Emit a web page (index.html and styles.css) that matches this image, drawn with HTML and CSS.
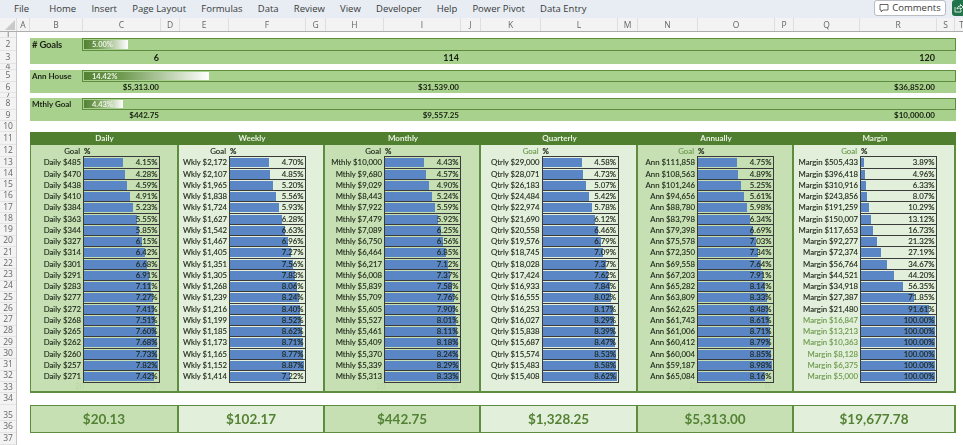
FILE: index.html
```html
<!DOCTYPE html>
<html lang="en">
<head>
<meta charset="utf-8">
<title>Goals dashboard</title>
<link rel="stylesheet" href="styles.css">
</head>
<body>
<div class="app">
  <nav class="menu">
    <span class="tab file">File</span><span class="tab">Home</span><span class="tab">Insert</span><span class="tab">Page Layout</span><span class="tab">Formulas</span><span class="tab">Data</span><span class="tab">Review</span><span class="tab">View</span><span class="tab">Developer</span><span class="tab">Help</span><span class="tab">Power Pivot</span><span class="tab">Data Entry</span>
    <button class="comments"><svg width="10" height="10" viewBox="0 0 10 10"><path d="M1 1.5h8v5.5H4L2.2 8.8V7H1z" fill="none" stroke="#555" stroke-width=".9"/></svg>Comments</button>
    <div class="share"><svg width="9" height="10" viewBox="0 0 9 10"><path d="M1 4v5h6V7M3 6c0-2 1.500-3 3.500-3V1.500L9 4 6.500 6.500V5C5 5 4 5.300 3 6z" fill="none" stroke="#fff" stroke-width=".8"/></svg></div>
  </nav>
  <div class="colhead">
    <span class="corner"><svg width="10" height="10" viewBox="0 0 10 10"><path d="M10 0v10H0z" fill="#c9c9c9"/></svg></span><span>A</span><span>B</span><span>C</span><span>D</span><span>E</span><span>F</span><span>G</span><span>H</span><span>I</span><span>J</span><span>K</span><span>L</span><span>M</span><span>N</span><span>O</span><span>P</span><span>Q</span><span>R</span><span>S</span><span>T</span>
  </div>
  <div class="workspace">
    <div class="rowhead">
      <span>1</span><span>2</span><span>3</span><span>4</span><span>5</span><span>6</span><span>7</span><span>8</span><span>9</span><span>10</span><span>11</span><span>12</span><span>13</span><span>14</span><span>15</span><span>16</span><span>17</span><span>18</span><span>19</span><span>20</span><span>21</span><span>22</span><span>23</span><span>24</span><span>25</span><span>26</span><span>27</span><span>28</span><span>29</span><span>30</span><span>31</span><span>32</span><span>33</span><span>34</span><span class="low">35</span><span>36</span><span>37</span>
    </div>
    <main class="sheet">
      <section class="kpi kpi-goals">
        <div class="kpi-top"><span class="kpi-name big">#&nbsp;Goals</span><div class="meter"><div class="meter-fill" style="--pct:5"><span>5.00%</span></div></div></div>
        <div class="kpi-vals big"><span>6</span><span>114</span><span>120</span></div>
      </section>
      <section class="kpi kpi-ann">
        <div class="kpi-top"><span class="kpi-name">Ann House</span><div class="meter"><div class="meter-fill" style="--pct:14.42"><span>14.42%</span></div></div></div>
        <div class="kpi-vals"><span>$5,313.00</span><span>$31,539.00</span><span>$36,852.00</span></div>
      </section>
      <section class="kpi kpi-mth">
        <div class="kpi-top"><span class="kpi-name">Mthly Goal</span><div class="meter"><div class="meter-fill" style="--pct:4.43"><span>4.43%</span></div></div></div>
        <div class="kpi-vals"><span>$442.75</span><span>$9,557.25</span><span>$10,000.00</span></div>
      </section>

      <section class="board">
        <div class="col c1 dark">
          <h2>Daily</h2>
          <div class="goal"><span>Goal</span><span class="pct">%</span></div>
          <div class="row"><span class="l">Daily $485</span><div class="b"><i style="--v:4.15"></i><span>4.15%</span></div></div>
          <div class="row"><span class="l">Daily $470</span><div class="b"><i style="--v:4.28"></i><span>4.28%</span></div></div>
          <div class="row"><span class="l">Daily $438</span><div class="b"><i style="--v:4.59"></i><span>4.59%</span></div></div>
          <div class="row"><span class="l">Daily $410</span><div class="b"><i style="--v:4.91"></i><span>4.91%</span></div></div>
          <div class="row"><span class="l">Daily $384</span><div class="b"><i style="--v:5.23"></i><span>5.23%</span></div></div>
          <div class="row"><span class="l">Daily $363</span><div class="b"><i style="--v:5.55"></i><span>5.55%</span></div></div>
          <div class="row"><span class="l">Daily $344</span><div class="b"><i style="--v:5.85"></i><span>5.85%</span></div></div>
          <div class="row"><span class="l">Daily $327</span><div class="b"><i style="--v:6.15"></i><span>6.15%</span></div></div>
          <div class="row"><span class="l">Daily $314</span><div class="b"><i style="--v:6.42"></i><span>6.42%</span></div></div>
          <div class="row"><span class="l">Daily $301</span><div class="b"><i style="--v:6.68"></i><span>6.68%</span></div></div>
          <div class="row"><span class="l">Daily $291</span><div class="b"><i style="--v:6.91"></i><span>6.91%</span></div></div>
          <div class="row"><span class="l">Daily $283</span><div class="b"><i style="--v:7.11"></i><span>7.11%</span></div></div>
          <div class="row"><span class="l">Daily $277</span><div class="b"><i style="--v:7.27"></i><span>7.27%</span></div></div>
          <div class="row"><span class="l">Daily $272</span><div class="b"><i style="--v:7.41"></i><span>7.41%</span></div></div>
          <div class="row"><span class="l">Daily $268</span><div class="b"><i style="--v:7.51"></i><span>7.51%</span></div></div>
          <div class="row"><span class="l">Daily $265</span><div class="b"><i style="--v:7.60"></i><span>7.60%</span></div></div>
          <div class="row"><span class="l">Daily $262</span><div class="b"><i style="--v:7.68"></i><span>7.68%</span></div></div>
          <div class="row"><span class="l">Daily $260</span><div class="b"><i style="--v:7.73"></i><span>7.73%</span></div></div>
          <div class="row"><span class="l">Daily $257</span><div class="b"><i style="--v:7.82"></i><span>7.82%</span></div></div>
          <div class="row last"><span class="l">Daily $271</span><div class="b"><i style="--v:7.42"></i><span>7.42%</span></div></div>
          <div class="ghost"><span>20</span><span>0</span></div>
        </div>
        <div class="col c2 light">
          <h2>Weekly</h2>
          <div class="goal"><span>Goal</span><span class="pct">%</span></div>
          <div class="row"><span class="l">Wkly $2,172</span><div class="b"><i style="--v:4.70"></i><span>4.70%</span></div></div>
          <div class="row"><span class="l">Wkly $2,107</span><div class="b"><i style="--v:4.85"></i><span>4.85%</span></div></div>
          <div class="row"><span class="l">Wkly $1,965</span><div class="b"><i style="--v:5.20"></i><span>5.20%</span></div></div>
          <div class="row"><span class="l">Wkly $1,838</span><div class="b"><i style="--v:5.56"></i><span>5.56%</span></div></div>
          <div class="row"><span class="l">Wkly $1,724</span><div class="b"><i style="--v:5.93"></i><span>5.93%</span></div></div>
          <div class="row"><span class="l">Wkly $1,627</span><div class="b"><i style="--v:6.28"></i><span>6.28%</span></div></div>
          <div class="row"><span class="l">Wkly $1,542</span><div class="b"><i style="--v:6.63"></i><span>6.63%</span></div></div>
          <div class="row"><span class="l">Wkly $1,467</span><div class="b"><i style="--v:6.96"></i><span>6.96%</span></div></div>
          <div class="row"><span class="l">Wkly $1,405</span><div class="b"><i style="--v:7.27"></i><span>7.27%</span></div></div>
          <div class="row"><span class="l">Wkly $1,351</span><div class="b"><i style="--v:7.56"></i><span>7.56%</span></div></div>
          <div class="row"><span class="l">Wkly $1,305</span><div class="b"><i style="--v:7.83"></i><span>7.83%</span></div></div>
          <div class="row"><span class="l">Wkly $1,268</span><div class="b"><i style="--v:8.06"></i><span>8.06%</span></div></div>
          <div class="row"><span class="l">Wkly $1,239</span><div class="b"><i style="--v:8.24"></i><span>8.24%</span></div></div>
          <div class="row"><span class="l">Wkly $1,216</span><div class="b"><i style="--v:8.40"></i><span>8.40%</span></div></div>
          <div class="row"><span class="l">Wkly $1,199</span><div class="b"><i style="--v:8.52"></i><span>8.52%</span></div></div>
          <div class="row"><span class="l">Wkly $1,185</span><div class="b"><i style="--v:8.62"></i><span>8.62%</span></div></div>
          <div class="row"><span class="l">Wkly $1,173</span><div class="b"><i style="--v:8.71"></i><span>8.71%</span></div></div>
          <div class="row"><span class="l">Wkly $1,165</span><div class="b"><i style="--v:8.77"></i><span>8.77%</span></div></div>
          <div class="row"><span class="l">Wkly $1,152</span><div class="b"><i style="--v:8.87"></i><span>8.87%</span></div></div>
          <div class="row last"><span class="l">Wkly $1,414</span><div class="b"><i style="--v:7.22"></i><span>7.22%</span></div></div>
        </div>
        <div class="col c3 dark">
          <h2>Monthly</h2>
          <div class="goal"><span>Goal</span><span class="pct">%</span></div>
          <div class="row"><span class="l">Mthly $10,000</span><div class="b"><i style="--v:4.43"></i><span>4.43%</span></div></div>
          <div class="row"><span class="l">Mthly $9,680</span><div class="b"><i style="--v:4.57"></i><span>4.57%</span></div></div>
          <div class="row"><span class="l">Mthly $9,029</span><div class="b"><i style="--v:4.90"></i><span>4.90%</span></div></div>
          <div class="row"><span class="l">Mthly $8,443</span><div class="b"><i style="--v:5.24"></i><span>5.24%</span></div></div>
          <div class="row"><span class="l">Mthly $7,922</span><div class="b"><i style="--v:5.59"></i><span>5.59%</span></div></div>
          <div class="row"><span class="l">Mthly $7,479</span><div class="b"><i style="--v:5.92"></i><span>5.92%</span></div></div>
          <div class="row"><span class="l">Mthly $7,089</span><div class="b"><i style="--v:6.25"></i><span>6.25%</span></div></div>
          <div class="row"><span class="l">Mthly $6,750</span><div class="b"><i style="--v:6.56"></i><span>6.56%</span></div></div>
          <div class="row"><span class="l">Mthly $6,464</span><div class="b"><i style="--v:6.85"></i><span>6.85%</span></div></div>
          <div class="row"><span class="l">Mthly $6,217</span><div class="b"><i style="--v:7.12"></i><span>7.12%</span></div></div>
          <div class="row"><span class="l">Mthly $6,008</span><div class="b"><i style="--v:7.37"></i><span>7.37%</span></div></div>
          <div class="row"><span class="l">Mthly $5,839</span><div class="b"><i style="--v:7.58"></i><span>7.58%</span></div></div>
          <div class="row"><span class="l">Mthly $5,709</span><div class="b"><i style="--v:7.76"></i><span>7.76%</span></div></div>
          <div class="row"><span class="l">Mthly $5,605</span><div class="b"><i style="--v:7.90"></i><span>7.90%</span></div></div>
          <div class="row"><span class="l">Mthly $5,527</span><div class="b"><i style="--v:8.01"></i><span>8.01%</span></div></div>
          <div class="row"><span class="l">Mthly $5,461</span><div class="b"><i style="--v:8.11"></i><span>8.11%</span></div></div>
          <div class="row"><span class="l">Mthly $5,409</span><div class="b"><i style="--v:8.18"></i><span>8.18%</span></div></div>
          <div class="row"><span class="l">Mthly $5,370</span><div class="b"><i style="--v:8.24"></i><span>8.24%</span></div></div>
          <div class="row"><span class="l">Mthly $5,339</span><div class="b"><i style="--v:8.29"></i><span>8.29%</span></div></div>
          <div class="row last"><span class="l">Mthly $5,313</span><div class="b"><i style="--v:8.33"></i><span>8.33%</span></div></div>
          <div class="ghost"><span>20</span><span>0</span></div>
        </div>
        <div class="col c4 light">
          <h2>Quarterly</h2>
          <div class="goal faded"><span>Goal</span><span class="pct">%</span></div>
          <div class="row"><span class="l">Qtrly $29,000</span><div class="b"><i style="--v:4.58"></i><span>4.58%</span></div></div>
          <div class="row"><span class="l">Qtrly $28,071</span><div class="b"><i style="--v:4.73"></i><span>4.73%</span></div></div>
          <div class="row"><span class="l">Qtrly $26,183</span><div class="b"><i style="--v:5.07"></i><span>5.07%</span></div></div>
          <div class="row"><span class="l">Qtrly $24,484</span><div class="b"><i style="--v:5.42"></i><span>5.42%</span></div></div>
          <div class="row"><span class="l">Qtrly $22,974</span><div class="b"><i style="--v:5.78"></i><span>5.78%</span></div></div>
          <div class="row"><span class="l">Qtrly $21,690</span><div class="b"><i style="--v:6.12"></i><span>6.12%</span></div></div>
          <div class="row"><span class="l">Qtrly $20,558</span><div class="b"><i style="--v:6.46"></i><span>6.46%</span></div></div>
          <div class="row"><span class="l">Qtrly $19,576</span><div class="b"><i style="--v:6.79"></i><span>6.79%</span></div></div>
          <div class="row"><span class="l">Qtrly $18,745</span><div class="b"><i style="--v:7.09"></i><span>7.09%</span></div></div>
          <div class="row"><span class="l">Qtrly $18,028</span><div class="b"><i style="--v:7.37"></i><span>7.37%</span></div></div>
          <div class="row"><span class="l">Qtrly $17,424</span><div class="b"><i style="--v:7.62"></i><span>7.62%</span></div></div>
          <div class="row"><span class="l">Qtrly $16,933</span><div class="b"><i style="--v:7.84"></i><span>7.84%</span></div></div>
          <div class="row"><span class="l">Qtrly $16,555</span><div class="b"><i style="--v:8.02"></i><span>8.02%</span></div></div>
          <div class="row"><span class="l">Qtrly $16,253</span><div class="b"><i style="--v:8.17"></i><span>8.17%</span></div></div>
          <div class="row"><span class="l">Qtrly $16,027</span><div class="b"><i style="--v:8.29"></i><span>8.29%</span></div></div>
          <div class="row"><span class="l">Qtrly $15,838</span><div class="b"><i style="--v:8.39"></i><span>8.39%</span></div></div>
          <div class="row"><span class="l">Qtrly $15,687</span><div class="b"><i style="--v:8.47"></i><span>8.47%</span></div></div>
          <div class="row"><span class="l">Qtrly $15,574</span><div class="b"><i style="--v:8.53"></i><span>8.53%</span></div></div>
          <div class="row"><span class="l">Qtrly $15,483</span><div class="b"><i style="--v:8.58"></i><span>8.58%</span></div></div>
          <div class="row last"><span class="l">Qtrly $15,408</span><div class="b"><i style="--v:8.62"></i><span>8.62%</span></div></div>
        </div>
        <div class="col c5 dark">
          <h2>Annually</h2>
          <div class="goal faded"><span>Goal</span><span class="pct">%</span></div>
          <div class="row"><span class="l">Ann $111,858</span><div class="b"><i style="--v:4.75"></i><span>4.75%</span></div></div>
          <div class="row"><span class="l">Ann $108,563</span><div class="b"><i style="--v:4.89"></i><span>4.89%</span></div></div>
          <div class="row"><span class="l">Ann $101,246</span><div class="b"><i style="--v:5.25"></i><span>5.25%</span></div></div>
          <div class="row"><span class="l">Ann $94,656</span><div class="b"><i style="--v:5.61"></i><span>5.61%</span></div></div>
          <div class="row"><span class="l">Ann $88,780</span><div class="b"><i style="--v:5.98"></i><span>5.98%</span></div></div>
          <div class="row"><span class="l">Ann $83,798</span><div class="b"><i style="--v:6.34"></i><span>6.34%</span></div></div>
          <div class="row"><span class="l">Ann $79,398</span><div class="b"><i style="--v:6.69"></i><span>6.69%</span></div></div>
          <div class="row"><span class="l">Ann $75,578</span><div class="b"><i style="--v:7.03"></i><span>7.03%</span></div></div>
          <div class="row"><span class="l">Ann $72,350</span><div class="b"><i style="--v:7.34"></i><span>7.34%</span></div></div>
          <div class="row"><span class="l">Ann $69,558</span><div class="b"><i style="--v:7.64"></i><span>7.64%</span></div></div>
          <div class="row"><span class="l">Ann $67,203</span><div class="b"><i style="--v:7.91"></i><span>7.91%</span></div></div>
          <div class="row"><span class="l">Ann $65,282</span><div class="b"><i style="--v:8.14"></i><span>8.14%</span></div></div>
          <div class="row"><span class="l">Ann $63,809</span><div class="b"><i style="--v:8.33"></i><span>8.33%</span></div></div>
          <div class="row"><span class="l">Ann $62,625</span><div class="b"><i style="--v:8.48"></i><span>8.48%</span></div></div>
          <div class="row"><span class="l">Ann $61,743</span><div class="b"><i style="--v:8.61"></i><span>8.61%</span></div></div>
          <div class="row"><span class="l">Ann $61,006</span><div class="b"><i style="--v:8.71"></i><span>8.71%</span></div></div>
          <div class="row"><span class="l">Ann $60,412</span><div class="b"><i style="--v:8.79"></i><span>8.79%</span></div></div>
          <div class="row"><span class="l">Ann $60,004</span><div class="b"><i style="--v:8.85"></i><span>8.85%</span></div></div>
          <div class="row"><span class="l">Ann $59,187</span><div class="b"><i style="--v:8.98"></i><span>8.98%</span></div></div>
          <div class="row last"><span class="l">Ann $65,084</span><div class="b"><i style="--v:8.16"></i><span>8.16%</span></div></div>
          <div class="ghost"><span>20</span><span>0</span></div>
        </div>
        <div class="col c6 light">
          <h2>Margin</h2>
          <div class="goal faded"><span>Goal</span><span class="pct">%</span></div>
          <div class="row"><span class="l">Margin $505,433</span><div class="b"><i style="--v:3.89"></i><span>3.89%</span></div></div>
          <div class="row"><span class="l">Margin $396,418</span><div class="b"><i style="--v:4.96"></i><span>4.96%</span></div></div>
          <div class="row"><span class="l">Margin $310,916</span><div class="b"><i style="--v:6.33"></i><span>6.33%</span></div></div>
          <div class="row"><span class="l">Margin $243,856</span><div class="b"><i style="--v:8.07"></i><span>8.07%</span></div></div>
          <div class="row"><span class="l">Margin $191,259</span><div class="b"><i style="--v:10.29"></i><span>10.29%</span></div></div>
          <div class="row"><span class="l">Margin $150,007</span><div class="b"><i style="--v:13.12"></i><span>13.12%</span></div></div>
          <div class="row"><span class="l">Margin $117,653</span><div class="b"><i style="--v:16.73"></i><span>16.73%</span></div></div>
          <div class="row"><span class="l">Margin $92,277</span><div class="b"><i style="--v:21.32"></i><span>21.32%</span></div></div>
          <div class="row"><span class="l">Margin $72,374</span><div class="b"><i style="--v:27.19"></i><span>27.19%</span></div></div>
          <div class="row"><span class="l">Margin $56,764</span><div class="b"><i style="--v:34.67"></i><span>34.67%</span></div></div>
          <div class="row"><span class="l">Margin $44,521</span><div class="b"><i style="--v:44.20"></i><span>44.20%</span></div></div>
          <div class="row"><span class="l">Margin $34,918</span><div class="b"><i style="--v:56.35"></i><span>56.35%</span></div></div>
          <div class="row"><span class="l">Margin $27,387</span><div class="b"><i style="--v:71.85"></i><span>71.85%</span></div></div>
          <div class="row"><span class="l">Margin $21,480</span><div class="b"><i style="--v:91.61"></i><span>91.61%</span></div></div>
          <div class="row met"><span class="l">Margin $16,847</span><div class="b"><i style="--v:100"></i><span>100.00%</span></div></div>
          <div class="row met"><span class="l">Margin $13,213</span><div class="b"><i style="--v:100"></i><span>100.00%</span></div></div>
          <div class="row met"><span class="l">Margin $10,363</span><div class="b"><i style="--v:100"></i><span>100.00%</span></div></div>
          <div class="row met"><span class="l">Margin $8,128</span><div class="b"><i style="--v:100"></i><span>100.00%</span></div></div>
          <div class="row met"><span class="l">Margin $6,375</span><div class="b"><i style="--v:100"></i><span>100.00%</span></div></div>
          <div class="row met last"><span class="l">Margin $5,000</span><div class="b"><i style="--v:100"></i><span>100.00%</span></div></div>
        </div>
      </section>

      <section class="totals">
        <div class="dark">$20.13</div>
        <div class="light">$102.17</div>
        <div class="dark">$442.75</div>
        <div class="light">$1,328.25</div>
        <div class="dark">$5,313.00</div>
        <div class="light">$19,677.78</div>
      </section>
    </main>
  </div>
</div>
</body>
</html>
```

FILE: styles.css
```css
* { box-sizing: border-box; }
html, body { margin: 0; height: 100%; background: #fff; overflow: hidden; }
.app { width: 963px; height: 445px; overflow: hidden; display: flex; flex-direction: column; font-family: Lato, "Liberation Sans", sans-serif; color: #1c2416; filter: blur(0.3px); }

/* Ribbon menu */
.menu { height: 18px; flex: none; display: flex; align-items: flex-start; gap: 15.200px; padding: 1px 0 0 14px; background: #e7edf3; font: 9.500px/15px "Open Sans", sans-serif; color: #3a3a3a; overflow: hidden; }
.tab { flex: none; }
.tab.file { margin-right: 5.100px; }
.comments { flex: none; margin: -1px 0 0 auto; width: 72px; height: 16px; padding: 0; display: flex; align-items: center; justify-content: center; gap: 3px; border: 1px solid #b9bcc0; border-radius: 3px; background: #fff; font: 9.500px/14px "Open Sans", sans-serif; color: #3a3a3a; }
.share { flex: none; margin: -1px 0 0 -9.200px; width: 11px; height: 16px; background: #21734a; border-radius: 3px 0 0 3px; padding: 3px 0 0 2px; }
.share svg { display: block; }

/* Spreadsheet headers */
.colhead { height: 14px; flex: none; display: grid; grid-template-columns: 17px 13px 53px 78px 19px 49px 77px 20px 58px 77px 20px 60px 77px 20px 60px 77px 19px 66px 77px 18px 14px; background: #f3f3f3; border-bottom: 1px solid #adadad; font: 8.500px/13px "Open Sans", sans-serif; color: #666; text-align: center; }
.colhead span { border-right: 1px solid #dedede; }
.corner { display: flex; justify-content: flex-end; align-items: flex-end; padding: 0 1px 1px 0; }
.workspace { flex: 1; min-height: 0; display: flex; }
.rowhead { width: 17px; flex: none; display: grid; grid-template-rows: 6px 13px 13px 6px 12px 11px 5px 12px 11px 11px 13px 11.750px repeat(20, 11.250px) 11.500px 11.500px 16.500px 11.500px 12px; background: #f3f3f3; border-right: 1px solid #c6c6c6; font: 8.500px/1 "Open Sans", sans-serif; color: #666; text-align: center; }
.rowhead span { display: flex; align-items: center; justify-content: center; overflow: hidden; border-bottom: 1px solid #e4e4e4; }
.rowhead .low { align-items: flex-end; padding-bottom: 1px; }

/* Sheet */
.sheet { flex: 1; min-width: 0; padding: 6px 7px 0 13px; }

/* KPI strips */
.kpi { background: #a9d18e; }
.kpi-goals { height: 26px; margin-bottom: 6px; }
.kpi-ann { height: 23px; margin-bottom: 5px; }
.kpi-mth { height: 23px; margin-bottom: 10.500px; }
.kpi-top { height: 50%; display: flex; }
.kpi-name { width: 52px; flex: none; padding-left: 2px; font-size: 8px; line-height: 12px; color: #1c2416; font-weight: 700; }
.kpi-name.big { font-size: 9.500px; line-height: 14.500px; letter-spacing: -.2px; }
.meter { flex: 1; padding: 1px; border: 1px solid #5f8d3f; }
.meter-fill { height: 100%; width: calc(var(--pct) * 1%); padding-left: 8px; background: linear-gradient(90deg, #548235, #6f9a50 30%, #ffffff); color: #e9f3e2; font-size: 7.500px; font-weight: 700; line-height: 9.500px; }
.kpi-vals { height: 50%; display: grid; grid-template-columns: 131px 300px 476px; font-size: 8px; font-weight: 700; line-height: 11.500px; text-align: right; color: #16200f; }
.kpi-vals.big { font-size: 9px; line-height: 13.500px; }
.kpi-vals span { padding-right: 2px; }

/* Period columns */
.board, .totals { display: grid; grid-template-columns: 149px 146px 156px 157px 156px 162px; }
.dark { background: #c6e0b4; }
.light { background: #e2efda; }
.col { height: 261.500px; border-right: 2px solid #5f8d3f; border-bottom: 2px solid #5f8d3f; --lw: 53px; --max: 8; }
.col:first-child { border-left: 1px solid #5f8d3f; --lw: 52px; --max: 7.820; }
.c2 { --lw: 50px; --max: 8.870; }
.c3 { --lw: 59px; --max: 8.330; }
.c4 { --lw: 60.500px; --max: 8.620; }
.c5 { --lw: 59px; --max: 8.980; }
.c6 { --lw: 66px; --max: 100; }
.col h2 { margin: 0 -2px 0 0; height: 13px; background: #4f7f2f; color: #e8f1e1; font-size: 8px; line-height: 13.500px; font-weight: 700; text-align: center; }
.col:first-child h2 { margin-left: -1px; }
.goal { height: 11.750px; display: grid; grid-template-columns: var(--lw) auto; font-size: 7.800px; font-weight: 700; line-height: 12.500px; -webkit-text-stroke: .12px currentColor; }
.goal > span:first-child { text-align: right; padding-right: 3px; font-weight: 400; }
.goal.faded > span:first-child { color: #6d9a4e; }
.goal .pct { padding-left: 1px; }
.row { height: 11.250px; display: grid; grid-template-columns: var(--lw) 77px; font-size: 7.800px; line-height: 12px; -webkit-text-stroke: .12px currentColor; }
.l { text-align: right; padding-right: 2px; white-space: nowrap; }
.met .l { color: #6d9a4e; }
.b { position: relative; border: 1px solid #3a3a3a; border-bottom: 0; text-align: right; padding-right: 1.500px; line-height: 10.500px; }
.last .b { border-bottom: 1px solid #3a3a3a; }
.b i { position: absolute; left: 0; top: 1px; bottom: 1px; width: calc((100% - 1px) * var(--v) / var(--max)); background: #5a86c5; }
.b span { position: relative; }
.ghost { display: flex; justify-content: space-between; width: calc(var(--lw) + 77px); padding: 0 4px 0 calc(var(--lw) - 8px); font-size: 8px; line-height: 11px; color: #b8d8a3; }

/* Totals */
.totals { margin-top: 11.500px; height: 28px; }
.totals div { display: flex; align-items: center; justify-content: center; border: solid #5f8d3f; border-width: 1.500px 2px 1.500px 0; font-size: 13.500px; font-weight: 700; color: #548235; }
.totals div:first-child { border-left-width: 1px; }
```
